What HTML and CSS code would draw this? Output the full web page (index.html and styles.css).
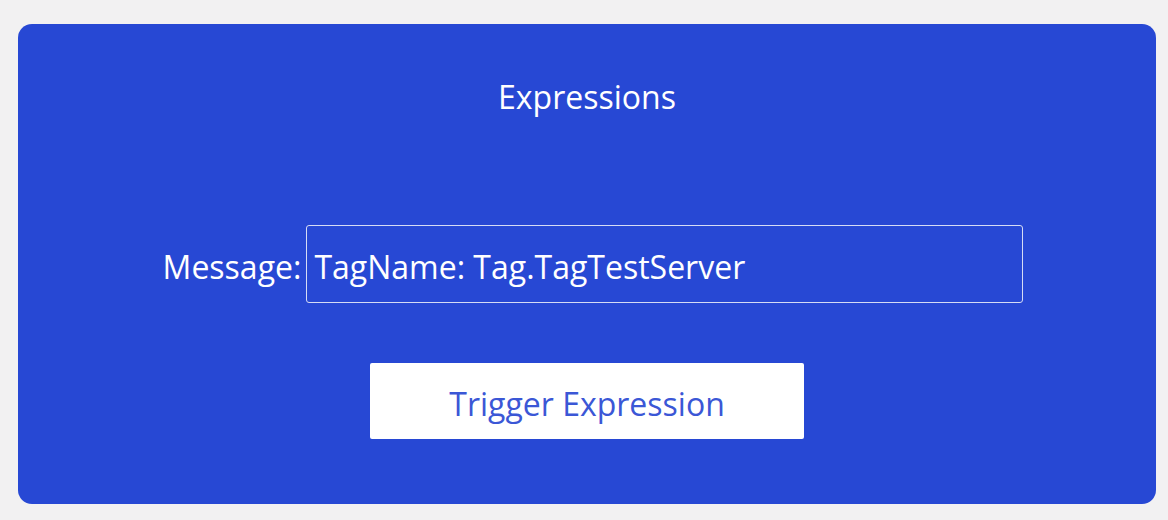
FILE: index.html
```html
<!DOCTYPE html>
<html lang="en">

<head>
    <title>Expressions</title>
    <link rel="stylesheet" href="styles.css">
</head>

<body>
    <div class="panel">
        <h1>Expressions</h1>

        <div class="message-row">
            <label for="message">Message:</label>
            <input id="message" type="text" value="TagName: Tag.TagTestServer">
        </div>

        <button class="trigger-btn">Trigger Expression</button>
    </div>
</body>

</html>
```

FILE: styles.css
```css
body {
    margin: 0;
    padding: 0;
    background-color: #f2f1f2;
    font-family: "Open Sans", "Noto Sans", Arial, sans-serif;
}

.panel {
    box-sizing: border-box;
    width: 1138px;
    height: 480px;
    margin: 24px 12px 0 18px;
    padding-top: 55px;
    background-color: #2748d4;
    border-radius: 14px;
    display: flex;
    flex-direction: column;
    align-items: center;
    color: #ffffff;
}

h1 {
    margin: 0;
    font-size: 32px;
    font-weight: normal;
    line-height: 36px;
}

.message-row {
    display: flex;
    align-items: center;
    gap: 5px;
    margin-top: 110px;
    margin-left: 12px;
}

.message-row label {
    padding-top: 4px;
    font-size: 32px;
}

.message-row input {
    box-sizing: border-box;
    width: 717px;
    height: 78px;
    padding: 4px 7px 0;
    background: transparent;
    border: 1px solid #d6dcf5;
    border-radius: 3px;
    color: #ffffff;
    font-family: inherit;
    font-size: 32px;
    outline: none;
}

.trigger-btn {
    box-sizing: border-box;
    width: 434px;
    height: 76px;
    margin-top: 60px;
    padding-top: 5px;
    background-color: #ffffff;
    border: none;
    border-radius: 2px;
    color: #3b57d6;
    font-family: inherit;
    font-size: 32px;
    cursor: pointer;
}
```
